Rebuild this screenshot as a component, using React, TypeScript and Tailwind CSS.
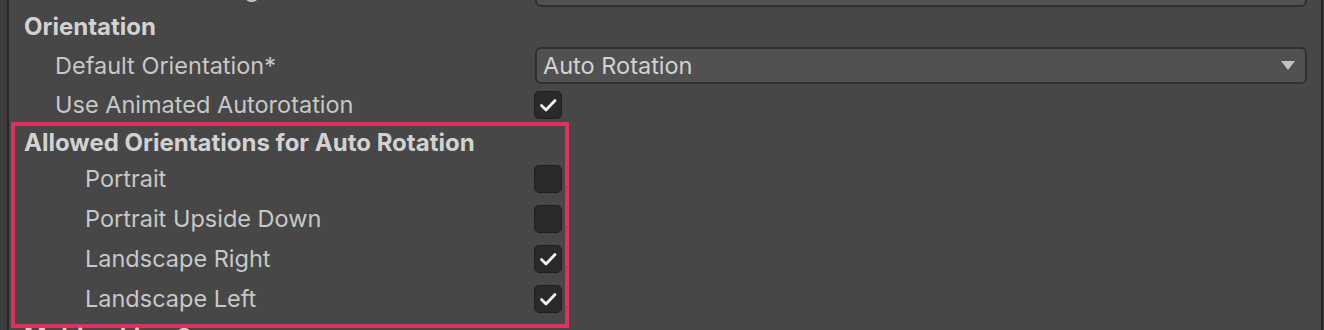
import React from 'react';

const font = { fontFamily: 'Inter, "Noto Sans", sans-serif' };

const Check: React.FC = () => (
  <svg width="18" height="14" viewBox="0 0 18 14" fill="none">
    <polyline
      points="2.5,7.5 7,12 16,2.5"
      stroke="#f2f2f2"
      strokeWidth="2.8"
      strokeLinecap="round"
      strokeLinejoin="round"
    />
  </svg>
);

const Toggle: React.FC<{ checked?: boolean }> = ({ checked }) => (
  <div className="shrink-0 w-[28px] h-[28px] rounded-[5px] bg-[#2a2a2a] border border-[#1f1f1f] flex items-center justify-center">
    {checked && <Check />}
  </div>
);

const Dropdown: React.FC<{ value?: string }> = ({ value }) => (
  <div className="shrink-0 w-[772px] h-[37px] rounded-[6px] bg-[#515151] border-2 border-[#303030] flex items-center justify-between pl-[6px] pr-[10px]">
    <span className="text-[23.5px] text-[#d2d2d2]">{value}</span>
    <svg width="14" height="10" viewBox="0 0 14 10">
      <polygon points="0,0 14,0 7,9" fill="#c4c4c4" />
    </svg>
  </div>
);

const BoxRow: React.FC<{ label: string; checked?: boolean }> = ({ label, checked }) => (
  <div className="shrink-0 flex items-center justify-between h-[40px] pl-[70px] pr-[3px]">
    <span className="text-[23.5px] text-[#c8c8c8]">{label}</span>
    <Toggle checked={checked} />
  </div>
);

export default function App() {
  return (
    <div className="w-[1324px] h-[330px] overflow-hidden bg-[#474747] flex" style={font}>
      <div className="shrink-0 w-[7px] bg-[#3c3c3c]" />
      <div className="shrink-0 w-[2px] bg-[#282828]" />

      <div className="flex-1 flex flex-col mt-[-32px]">
        <div className="shrink-0 flex items-center h-[40px] pl-[46px]">
          <div className="w-[480px] text-[23.5px] text-[#c8c8c8] translate-y-[1px]">Resolution Scaling Mode</div>
          <Dropdown />
        </div>

        <div className="shrink-0 flex items-center h-[38px] pl-[15px] text-[24px] font-bold text-[#d2d2d2]">
          Orientation
        </div>

        <div className="shrink-0 flex items-center h-[39px] pl-[46px]">
          <div className="w-[480px] text-[23.5px] text-[#c8c8c8]">Default Orientation*</div>
          <Dropdown value="Auto Rotation" />
        </div>

        <div className="shrink-0 flex items-center h-[37px] pl-[46px] pt-[2px]">
          <div className="w-[479px] text-[23.5px] text-[#c8c8c8]">Use Animated Autorotation</div>
          <Toggle checked />
        </div>

        <div className="shrink-0 ml-[2px] w-[558px] border-4 border-[#e0305c] pb-[5px]">
          <div className="flex items-center h-[33px] pl-[9px] pt-[1px] text-[24px] font-bold text-[#d2d2d2]">
            Allowed Orientations for Auto Rotation
          </div>
          <BoxRow label="Portrait" />
          <BoxRow label="Portrait Upside Down" />
          <BoxRow label="Landscape Right" checked />
          <BoxRow label="Landscape Left" checked />
        </div>

        <div className="shrink-0 flex items-center h-[36px] mt-[-8px] pl-[15px] text-[24px] font-bold text-[#d2d2d2]">
          Multitasking Support
        </div>
      </div>

      <div className="shrink-0 w-[2px] bg-[#282828]" />
      <div className="shrink-0 w-[1px] bg-[#3c3c3c]" />
    </div>
  );
}
